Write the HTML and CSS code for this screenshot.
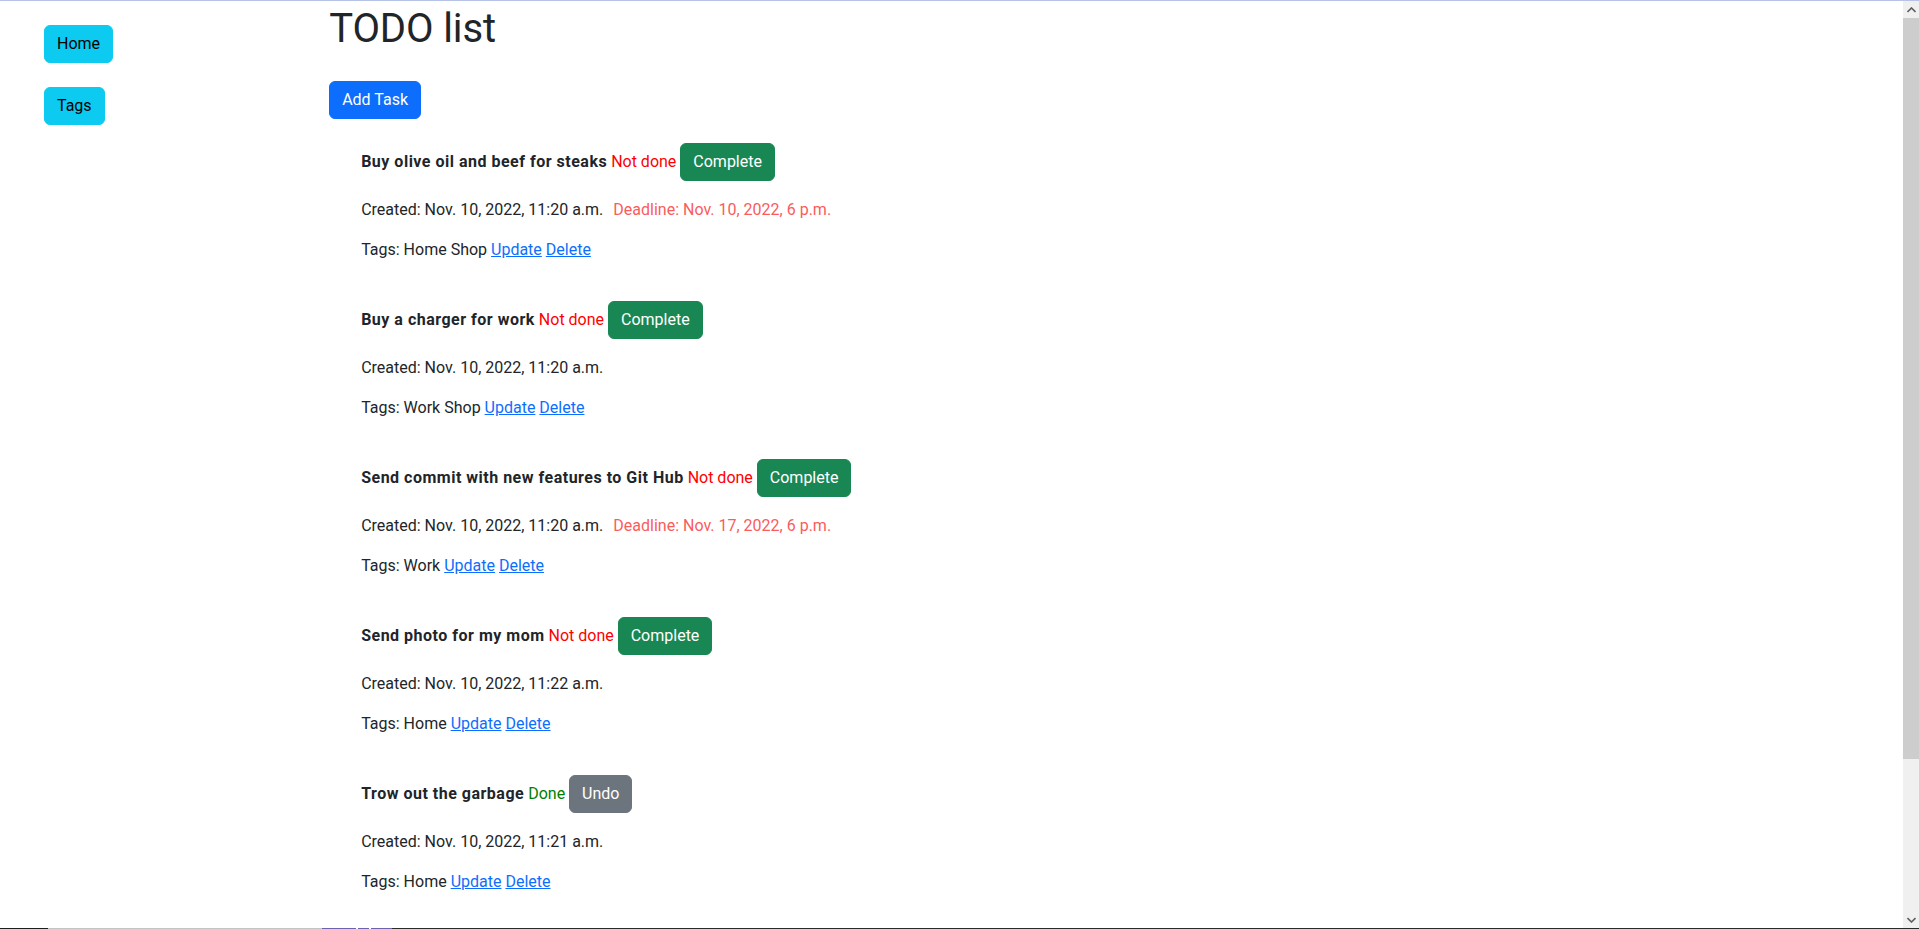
FILE: index.html
```html
<!DOCTYPE html>
<html lang="en">
<head>
<meta charset="utf-8">
<title>TODO list</title>
<link rel="stylesheet" href="styles.css">
</head>
<body>
<div class="window">
  <div class="topline"></div>
  <div class="viewport">
    <div class="page">
      <aside class="sidebar">
        <ul class="nav">
          <li><a class="btn btn-info" href="#">Home</a></li>
          <li><a class="btn btn-info" href="#">Tags</a></li>
        </ul>
      </aside>
      <main class="content">
        <h1 class="title">TODO list</h1>
        <div class="actions"><a class="btn btn-primary" href="#">Add Task</a></div>
        <ul class="tasks">
          <li class="task">
            <p class="task-head"><strong>Buy olive oil and beef for steaks</strong> <span class="not-done">Not done</span> <a class="btn btn-success" href="#">Complete</a></p>
            <p>Created: Nov. 10, 2022, 11:20 a.m.<span class="deadline">Deadline: Nov. 10, 2022, 6 p.m.</span></p>
            <p>Tags: Home Shop <a class="link" href="#">Update</a> <a class="link" href="#">Delete</a></p>
          </li>
          <li class="task">
            <p class="task-head"><strong>Buy a charger for work</strong> <span class="not-done">Not done</span> <a class="btn btn-success" href="#">Complete</a></p>
            <p>Created: Nov. 10, 2022, 11:20 a.m.</p>
            <p>Tags: Work Shop <a class="link" href="#">Update</a> <a class="link" href="#">Delete</a></p>
          </li>
          <li class="task">
            <p class="task-head"><strong>Send commit with new features to Git Hub</strong> <span class="not-done">Not done</span> <a class="btn btn-success" href="#">Complete</a></p>
            <p>Created: Nov. 10, 2022, 11:20 a.m.<span class="deadline">Deadline: Nov. 17, 2022, 6 p.m.</span></p>
            <p>Tags: Work <a class="link" href="#">Update</a> <a class="link" href="#">Delete</a></p>
          </li>
          <li class="task">
            <p class="task-head"><strong>Send photo for my mom</strong> <span class="not-done">Not done</span> <a class="btn btn-success" href="#">Complete</a></p>
            <p>Created: Nov. 10, 2022, 11:22 a.m.</p>
            <p>Tags: Home <a class="link" href="#">Update</a> <a class="link" href="#">Delete</a></p>
          </li>
          <li class="task">
            <p class="task-head"><strong>Trow out the garbage</strong> <span class="done">Done</span> <a class="btn btn-secondary" href="#">Undo</a></p>
            <p>Created: Nov. 10, 2022, 11:21 a.m.</p>
            <p>Tags: Home <a class="link" href="#">Update</a> <a class="link" href="#">Delete</a></p>
          </li>
        </ul>
      </main>
    </div>
    <div class="scrollbar">
      <div class="sb-arrow">
        <svg width="9" height="6" viewBox="0 0 9 6"><path d="M0.5 5 L4.5 1 L8.5 5" fill="none" stroke="#606060" stroke-width="1.6"/></svg>
      </div>
      <div class="sb-track">
        <div class="sb-thumb"></div>
      </div>
      <div class="sb-arrow">
        <svg width="9" height="6" viewBox="0 0 9 6"><path d="M0.5 1 L4.5 5 L8.5 1" fill="none" stroke="#606060" stroke-width="1.6"/></svg>
      </div>
    </div>
  </div>
  <div class="bottomline"></div>
</div>
</body>
</html>
```
FILE: styles.css
```css
html, body {
  margin: 0;
  padding: 0;
  height: 100%;
  overflow: hidden;
}

body {
  font-family: Roboto, "Liberation Sans", sans-serif;
  font-size: 16px;
  line-height: 1.5;
  color: #212529;
  background: #fff;
}

.window {
  height: 929px;
  display: flex;
  flex-direction: column;
}

.topline {
  height: 1px;
  background: #b6c2e6;
  flex: none;
}

.bottomline {
  height: 1px;
  flex: none;
  background: linear-gradient(to right,
    #1e1e1e 0, #1e1e1e 48px,
    #c4c4c4 48px, #c4c4c4 322px,
    #6d62b0 322px, #6d62b0 356px,
    #ffffff 356px, #ffffff 358px,
    #6d62b0 358px, #6d62b0 369px,
    #ffffff 369px, #ffffff 371px,
    #6d62b0 371px, #6d62b0 392px,
    #2a2a2a 392px, #2a2a2a 100%);
}

.viewport {
  flex: 1;
  display: flex;
  min-height: 0;
}

.page {
  flex: 1;
  display: grid;
  grid-template-columns: 1fr 5fr;
  align-items: start;
  overflow: hidden;
}

.sidebar {
  padding: 0 12px;
}

.nav {
  list-style: none;
  margin: 24px 0 0;
  padding-left: 32px;
  display: flex;
  flex-direction: column;
  align-items: flex-start;
  gap: 24px;
}

.content {
  padding: 0 12px;
}

.title {
  font-size: 40px;
  font-weight: 400;
  line-height: 48px;
  margin: 4px 0 0;
  letter-spacing: -0.1px;
}

.actions {
  margin-top: 28px;
}

.btn {
  display: inline-block;
  padding: 6px 12px;
  border: 1px solid transparent;
  border-radius: 6px;
  font-size: 16px;
  line-height: 24px;
  text-decoration: none;
  vertical-align: baseline;
}

.btn-info {
  background: #0dcaf0;
  border-color: #0dcaf0;
  color: #000;
}

.btn-primary {
  background: #0d6efd;
  border-color: #0d6efd;
  color: #fff;
}

.btn-success {
  background: #198754;
  border-color: #198754;
  color: #fff;
}

.btn-secondary {
  background: #6c757d;
  border-color: #6c757d;
  color: #fff;
}

.tasks {
  list-style: none;
  margin: 24px 0 0;
  padding-left: 32px;
}

.task {
  padding-bottom: 24px;
}

.task p {
  margin: 0 0 15px;
  padding-top: 1px;
}

.task p.task-head {
  margin: 0 0 16px;
  padding-top: 0;
}

.task-head strong {
  font-weight: 700;
  letter-spacing: 0.5px;
}

.not-done {
  color: #ff0000;
}

.done {
  color: #008000;
}

.deadline {
  color: #fa5c5c;
  margin-left: 10px;
}

.link {
  color: #0d6efd;
  text-decoration: underline;
}

.scrollbar {
  width: 16px;
  flex: none;
  display: flex;
  flex-direction: column;
  background: #f0f0f0;
}

.sb-arrow {
  height: 17px;
  flex: none;
  display: flex;
  align-items: center;
  justify-content: center;
}

.sb-track {
  flex: 1;
  display: flex;
  flex-direction: column;
}

.sb-thumb {
  height: 741px;
  background: #cdcdcd;
}
```
